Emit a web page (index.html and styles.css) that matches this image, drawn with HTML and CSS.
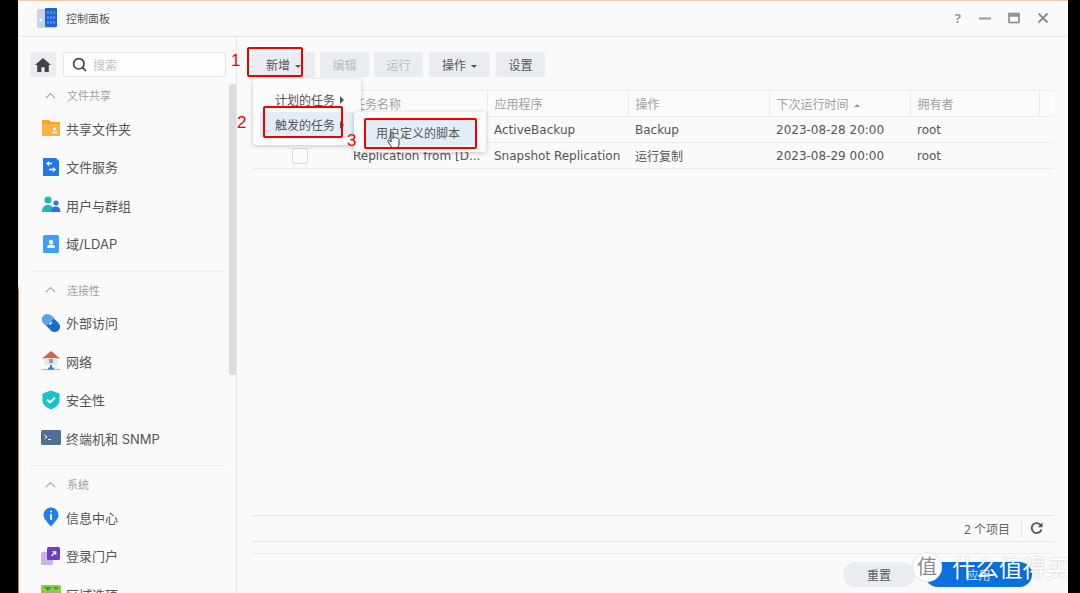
FILE: index.html
```html
<!DOCTYPE html>
<html lang="zh-CN">

<head>
    <meta charset="UTF-8">
    <meta name="viewport" content="width=device-width, initial-scale=1.0">
    <title>控制面板</title>
    <link rel="stylesheet" href="styles.css">
</head>

<body>
    <div class="desktop">
        <div class="window">
            <header class="titlebar">
                <svg class="app-icon" width="22" height="22" viewBox="0 0 22 22">
                    <rect x="1" y="2" width="20" height="19" rx="2" fill="#c9d3e6" />
                    <rect x="9" y="1" width="12" height="19" rx="1" fill="#1f63d8" />
                    <path d="M12 4v13M15 4v13M18 4v13" stroke="#7fb2f5" stroke-width="1" stroke-dasharray="3 2" />
                    <circle cx="5" cy="13" r="1.6" fill="#fff" />
                </svg>
                <span class="app-title">控制面板</span>
                <div class="win-buttons">
                    <span class="win-help">?</span>
                    <svg width="12" height="12" viewBox="0 0 12 12"><path d="M0 6.5h12" stroke="#999" stroke-width="2" /></svg>
                    <svg width="12" height="12" viewBox="0 0 12 12"><rect x="1" y="1.5" width="10" height="9" fill="none" stroke="#8d8d8d" stroke-width="1.6" /><path d="M1 3.5h10" stroke="#8d8d8d" stroke-width="2.4" /></svg>
                    <svg width="12" height="12" viewBox="0 0 12 12"><path d="M1.5 1.5l9 9M10.5 1.5l-9 9" stroke="#8d8d8d" stroke-width="1.9" /></svg>
                </div>
            </header>

            <div class="content">
                <aside class="sidebar">
                    <div class="search-row">
                        <button class="home-btn">
                            <svg width="16" height="14" viewBox="0 0 16 14"><path d="M8 0L0 7h2.2v7h4.2V9.3h3.2V14h4.2V7H16z" fill="#444" /></svg>
                        </button>
                        <div class="search-box">
                            <svg width="15" height="15" viewBox="0 0 15 15"><circle cx="6.8" cy="6.8" r="5.2" fill="none" stroke="#444" stroke-width="1.7" /><path d="M10.6 10.6l3.4 3.4" stroke="#444" stroke-width="1.7" /></svg>
                            <span>搜索</span>
                        </div>
                    </div>

                    <section class="nav-group">
                        <div class="nav-head">
                            <svg width="11" height="7" viewBox="0 0 11 7"><path d="M1 6l4.500-4.500L10 6" fill="none" stroke="#aaa" stroke-width="1.200" /></svg>
                            <span>文件共享</span>
                        </div>
                        <div class="nav-item">
                            <svg width="20" height="20" viewBox="0 0 20 20"><path d="M1 2h7l2 2h9v14H1z" fill="#f6a429" /><path d="M1 6h18v12H1z" fill="#fbb442" /><path d="M11 14.500h5" stroke="#fff" stroke-width="1.500" /><circle cx="13.500" cy="11" r="1.500" fill="#fff" /></svg>
                            <span>共享文件夹</span>
                        </div>
                        <div class="nav-item">
                            <svg width="20" height="20" viewBox="0 0 20 20"><path d="M3 1h12l3 3v14a1 1 0 0 1-1 1H3a1 1 0 0 1-1-1V2a1 1 0 0 1 1-1z" fill="#2278ea" /><path d="M11 6.500H6.500M8 4.800L6 6.600l2 1.800M8 12.500h5.500M12 10.800l2 1.800-2 1.800" fill="none" stroke="#fff" stroke-width="1.300" /></svg>
                            <span>文件服务</span>
                        </div>
                        <div class="nav-item">
                            <svg width="20" height="20" viewBox="0 0 20 20"><circle cx="7" cy="5" r="3.600" fill="#1cb8bd" /><path d="M1 17c0-5 2.500-7 6-7s6 2 6 7z" fill="#1cb8bd" /><circle cx="15" cy="8" r="2.500" fill="#2f73de" /><path d="M10 17c0-3.500 2-5.500 5-5.500s4.500 2 4.500 5.500z" fill="#2f73de" /></svg>
                            <span>用户与群组</span>
                        </div>
                        <div class="nav-item">
                            <svg width="20" height="20" viewBox="0 0 20 20"><rect x="2" y="1" width="16" height="18" rx="1.500" fill="#3f9ef5" /><circle cx="10" cy="8" r="2.200" fill="#fff" /><path d="M6 14c0-2.500 1.500-3.500 4-3.500s4 1 4 3.500z" fill="#fff" /></svg>
                            <span>域/LDAP</span>
                        </div>
                    </section>

                    <section class="nav-group">
                        <div class="nav-head">
                            <svg width="11" height="7" viewBox="0 0 11 7"><path d="M1 6l4.500-4.500L10 6" fill="none" stroke="#aaa" stroke-width="1.200" /></svg>
                            <span>连接性</span>
                        </div>
                        <div class="nav-item">
                            <svg width="20" height="20" viewBox="0 0 20 20"><path d="M6 1.500a5 5 0 0 0-3.500 8.500l7.500 7.500a5 5 0 0 0 7.500-7.500L10 2.500a5 5 0 0 0-4-1z" fill="#1c67d8" /><path d="M6 1.500a5 5 0 0 0-3.500 8.500l3 3 8-8-3.500-2.500a5 5 0 0 0-4-1z" fill="#55a5f2" /><path d="M8.500 11.500l2.500-2.500" stroke="#fff" stroke-width="1.600" /></svg>
                            <span>外部访问</span>
                        </div>
                        <div class="nav-item">
                            <svg width="20" height="20" viewBox="0 0 20 20"><path d="M10 0L1 7.500h18z" fill="#d9604c" /><path d="M3.500 7h13v7h-13z" fill="#e4e4e4" /><rect x="8" y="8" width="4" height="4" fill="#9a9a9a" /><path d="M10 14v3" stroke="#2f7de0" stroke-width="2" /><path d="M1 18.500h18" stroke="#b5b5b5" stroke-width="1.200" /><path d="M7 17.500h6" stroke="#2f7de0" stroke-width="2" /></svg>
                            <span>网络</span>
                        </div>
                        <div class="nav-item">
                            <svg width="20" height="20" viewBox="0 0 20 20"><path d="M10 .5l8.500 3v7c0 4-3.500 7-8.500 9-5-2-8.500-5-8.500-9v-7z" fill="#14c4c9" /><path d="M6 9.500l3 3 5-5" fill="none" stroke="#fff" stroke-width="1.800" /></svg>
                            <span>安全性</span>
                        </div>
                        <div class="nav-item">
                            <svg width="20" height="20" viewBox="0 0 20 20"><rect y="2" width="20" height="15" rx="1.500" fill="#4f6f94" /><path d="M3.500 7l2.500 2-2.500 2M7 11.500h3" fill="none" stroke="#fff" stroke-width="1" /></svg>
                            <span>终端机和 SNMP</span>
                        </div>
                    </section>

                    <section class="nav-group">
                        <div class="nav-head">
                            <svg width="11" height="7" viewBox="0 0 11 7"><path d="M1 6l4.500-4.500L10 6" fill="none" stroke="#aaa" stroke-width="1.200" /></svg>
                            <span>系统</span>
                        </div>
                        <div class="nav-item">
                            <svg width="20" height="20" viewBox="0 0 20 20"><path d="M10 .5a7.500 7.500 0 0 1 7.500 7.500c0 3.500-3 6-7.500 11.500C5.500 14 2.500 11.500 2.500 8A7.500 7.500 0 0 1 10 .5z" fill="#1f7df0" /><path d="M10 7v6" stroke="#fff" stroke-width="1.800" /><circle cx="10" cy="4.500" r="1.100" fill="#fff" /></svg>
                            <span>信息中心</span>
                        </div>
                        <div class="nav-item">
                            <svg width="20" height="20" viewBox="0 0 20 20"><rect y="6" width="12" height="13" rx="1.500" fill="#c9b0ea" /><rect x="6" y="1" width="13" height="13" rx="1.500" fill="#6a3fc0" /><path d="M10.500 10l4-4M11.500 5.800h3.200V9" fill="none" stroke="#fff" stroke-width="1.200" /></svg>
                            <span>登录门户</span>
                        </div>
                        <div class="nav-item">
                            <svg width="20" height="20" viewBox="0 0 20 20"><rect y="1" width="20" height="18" rx="1.500" fill="#8ccb3c" /><path d="M3 3l4 4 4-4zM12 3l3 3 3-3z" fill="#2e9a6a" /></svg>
                            <span>区域选项</span>
                        </div>
                    </section>

                    <div class="scroll-thumb"></div>
                </aside>

                <main class="main">
                    <div class="toolbar">
                        <button class="tool-btn btn-add">新增<i class="caret"></i></button>
                        <button class="tool-btn is-disabled btn-edit">编辑</button>
                        <button class="tool-btn is-disabled btn-edit">运行</button>
                        <button class="tool-btn btn-action">操作<i class="caret"></i></button>
                        <button class="tool-btn btn-edit">设置</button>
                    </div>

                    <div class="table-area">
                        <table class="task-table">
                            <colgroup>
                                <col class="col-name">
                                <col class="col-std">
                                <col class="col-std">
                                <col class="col-std">
                                <col class="col-owner">
                                <col>
                            </colgroup>
                            <thead>
                                <tr>
                                    <th class="name-cell">任务名称</th>
                                    <th>应用程序</th>
                                    <th>操作</th>
                                    <th>下次运行时间 <i class="sort-mark"></i></th>
                                    <th>拥有者</th>
                                    <th></th>
                                </tr>
                            </thead>
                            <tbody>
                                <tr>
                                    <td></td>
                                    <td>ActiveBackup</td>
                                    <td>Backup</td>
                                    <td>2023-08-28 20:00</td>
                                    <td>root</td>
                                    <td></td>
                                </tr>
                                <tr>
                                    <td class="name-cell"><span class="checkbox"></span>Replication from [D...</td>
                                    <td>Snapshot Replication</td>
                                    <td>运行复制</td>
                                    <td>2023-08-29 00:00</td>
                                    <td>root</td>
                                    <td></td>
                                </tr>
                            </tbody>
                        </table>
                    </div>

                    <div class="status-bar">
                        <span>2 个项目</span>
                        <i class="status-sep"></i>
                        <svg width="13" height="13" viewBox="0 0 13 13"><path d="M10.800 3.200A5 5 0 1 0 11.500 7.500" fill="none" stroke="#555" stroke-width="1.800" /><path d="M12.500 .5v4.800H7.700z" fill="#555" /></svg>
                    </div>

                    <div class="form-actions">
                        <button class="pill-btn btn-reset">重置</button>
                        <button class="pill-btn btn-apply">应用</button>
                    </div>

                    <!-- 新增 dropdown and its submenu -->
                    <div class="menu menu-main">
                        <div class="menu-item">计划的任务<i class="menu-arrow"></i></div>
                        <div class="menu-item is-hover">触发的任务<i class="menu-arrow"></i></div>
                    </div>
                    <div class="menu menu-sub">
                        <div class="menu-item is-hover">用户定义的脚本</div>
                    </div>
                    <svg class="hand-cursor" width="14" height="18" viewBox="0 0 14 18">
                        <path d="M4 1.500c0-1 2-1 2 0v6l.5-1.200c1-.5 1.500 0 1.800.6.800-.6 1.500-.2 1.800.5.800-.4 1.900 0 1.900 1V13c0 2.500-1.500 4-3.500 4H7c-2 0-2.500-1-3.500-2.500L1 10.500c-.6-1.200.8-2 1.700-1L4 11z" fill="#fff" stroke="#333" stroke-width="1" />
                    </svg>

                    <!-- red step marks -->
                    <div class="mark mark-1"></div>
                    <div class="mark mark-2"></div>
                    <div class="mark mark-3"></div>
                    <span class="mark-num num-1">1</span>
                    <span class="mark-num num-2">2</span>
                    <span class="mark-num num-3">3</span>
                </main>
            </div>
        </div>

        <div class="stamp">
            <span class="stamp-logo">值</span>
            <span class="stamp-text">什么值得买</span>
        </div>
    </div>
</body>

</html>
```

FILE: styles.css
```css
html,
body {
    margin: 0;
    height: 100%;
    overflow: hidden;
    background: #000;
}

body {
    font-family: "Noto Sans", "Noto Sans CJK SC", sans-serif;
    color: #555;
    font-size: 13px;
}

button {
    font-family: inherit;
    border: none;
    padding: 0;
}

.desktop {
    position: relative;
    width: 1050px;
    height: 593px;
    margin-left: 18px;
    padding-top: 1px;
    box-sizing: border-box;
    background: linear-gradient(#e9c9a6 1px, #f4f1ec 1px, #f4f1ec 48%, #d2742f 49%);
}

.window {
    height: 592px;
    margin-left: 1px;
    background: #fafafa;
    display: flex;
    flex-direction: column;
}

/* title bar */
.titlebar {
    height: 33px;
    flex: none;
    display: flex;
    align-items: center;
    padding: 0 19px 2px 17px;
    border-bottom: 1px solid #e6e6e6;
}

.app-icon {
    margin-right: 8px;
}

.app-title {
    font-size: 11px;
    color: #555;
}

.win-buttons {
    margin-left: auto;
    display: flex;
    align-items: center;
    gap: 17px;
}

.win-help {
    font-size: 13px;
    font-weight: 700;
    color: #999;
    margin-right: 1px;
}

.content {
    flex: 1;
    min-height: 0;
    display: flex;
}

/* left navigation */
.sidebar {
    position: relative;
    width: 218px;
    flex: none;
    box-sizing: border-box;
    overflow: hidden;
    border-right: 1px solid #e6e6e6;
}

.search-row {
    display: flex;
    gap: 7px;
    padding: 15px 10px 5px 11px;
}

.home-btn {
    width: 26px;
    height: 25px;
    background: #e9edf1;
    border-radius: 3px;
    display: flex;
    align-items: center;
    justify-content: center;
}

.search-box {
    flex: 1;
    height: 25px;
    box-sizing: border-box;
    border: 1px solid #e4e4e4;
    border-radius: 3px;
    background: #fdfdfd;
    display: flex;
    align-items: center;
    gap: 6px;
    padding-left: 8px;
    font-size: 12px;
    color: #c4c4c4;
}

.nav-group {
    margin: 0 11px;
    padding-bottom: 7.5px;
    margin-bottom: 5px;
    border-bottom: 1px solid #eeeeee;
}

.nav-group:last-of-type {
    border-bottom: none;
}

.nav-head {
    height: 26px;
    display: flex;
    align-items: center;
    gap: 11px;
    padding-left: 15px;
    margin-bottom: 1px;
    font-size: 11px;
    color: #a2a2a2;
}

.nav-item {
    height: 38.5px;
    display: flex;
    align-items: center;
    gap: 5px;
    padding-left: 11px;
    font-family: Inter, "Noto Sans CJK SC", sans-serif;
    color: #555;
}

.scroll-thumb {
    position: absolute;
    left: 210px;
    top: 47px;
    width: 7px;
    height: 291px;
    border-radius: 4px;
    background: #dcdcdc;
}

/* right side */
.main {
    position: relative;
    flex: 1;
    min-width: 0;
    display: flex;
    flex-direction: column;
}

.toolbar {
    display: flex;
    gap: 5px;
    padding: 15px 0 13px 15px;
}

.tool-btn {
    height: 25px;
    background: #e9edf1;
    border-radius: 3px;
    color: #555;
    font-size: 12px;
    text-align: center;
}

.btn-add {
    width: 63px;
}

.btn-edit {
    width: 49px;
}

.btn-action {
    width: 61px;
    margin-left: 1px;
    margin-right: 1px;
}

.is-disabled {
    color: #b9bcbf;
}

.caret {
    display: inline-block;
    margin-left: 5px;
    vertical-align: middle;
    border-left: 3px solid transparent;
    border-right: 3px solid transparent;
    border-top: 3px solid #555;
}

.table-area {
    flex: 1;
    min-height: 0;
    margin: 0 14px 0 15px;
    border-bottom: 1px solid #e6e6e6;
}

.task-table {
    width: 802px;
    table-layout: fixed;
    border-collapse: collapse;
    font-family: "DejaVu Sans", "Noto Sans CJK SC", sans-serif;
    font-size: 12px;
}

.col-name {
    width: 235px;
}

.col-std {
    width: 141px;
}

.col-owner {
    width: 129px;
}

.task-table th {
    height: 25px;
    padding: 0 0 0 7px;
    text-align: left;
    font-weight: 400;
    color: #a0a0a0;
    border-top: 1px solid #ececec;
    border-bottom: 1px solid #ececec;
    border-right: 1px solid #ececec;
    background: #fbfbfb;
}

.task-table th:last-child {
    border-right: none;
}

.task-table td {
    height: 25px;
    padding: 0 0 0 7px;
    color: #555;
    white-space: nowrap;
    border-bottom: 1px solid #ececec;
}

.task-table .name-cell {
    padding-left: 101px;
    position: relative;
}

.checkbox {
    position: absolute;
    left: 40px;
    top: 5px;
    width: 14px;
    height: 14px;
    border: 1px solid #dcdcdc;
    border-radius: 2px;
    background: #fbfbfb;
}

.sort-mark {
    display: inline-block;
    margin-left: 2px;
    vertical-align: middle;
    border-left: 3px solid transparent;
    border-right: 3px solid transparent;
    border-bottom: 3px solid #999;
}

.status-bar {
    height: 25px;
    flex: none;
    margin: 0 14px 0 15px;
    display: flex;
    align-items: center;
    justify-content: flex-end;
    gap: 8px;
    padding-right: 11px;
    border-bottom: 1px solid #e6e6e6;
    font-size: 12px;
    color: #666;
}

.status-sep {
    width: 1px;
    height: 17px;
    background: #e2e2e2;
    margin-left: 3px;
}

.form-actions {
    height: 40px;
    flex: none;
    margin: 11px 14px 0 15px;
    box-sizing: border-box;
    padding: 8px 22px 0 0;
    display: flex;
    justify-content: flex-end;
    gap: 10px;
    border-top: 1px solid #ececec;
}

.pill-btn {
    height: 25px;
    border-radius: 13px;
    font-size: 12px;
}

.btn-reset {
    width: 72px;
    background: #e9edf1;
    color: #555;
}

.btn-apply {
    width: 107px;
    background: #0a70e0;
    color: #d8e8fb;
}

/* dropdown menus */
.menu {
    position: absolute;
    background: #fbfbfb;
    border-radius: 3px;
    box-shadow: 0 1px 5px rgba(0, 0, 0, 0.22);
    font-size: 12px;
}

.menu-main {
    left: 16px;
    top: 42px;
    width: 108px;
    height: 66px;
    padding-top: 8px;
    box-sizing: border-box;
}

.menu-sub {
    left: 117px;
    top: 75px;
    width: 132px;
    height: 40px;
    padding: 8px 10px 0;
    box-sizing: border-box;
}

.menu-item {
    height: 25px;
    display: flex;
    align-items: center;
    padding-left: 22px;
    color: #555;
}

.menu-sub .menu-item {
    height: 26px;
    padding-left: 12px;
}

.menu-item.is-hover {
    background: #e3edf6;
}

.menu-main .menu-item.is-hover {
    margin-left: 7px;
    padding-left: 15px;
}

.menu-arrow {
    margin-left: 5px;
    border-top: 4px solid transparent;
    border-bottom: 4px solid transparent;
    border-left: 4px solid #555;
}

.hand-cursor {
    position: absolute;
    left: 150px;
    top: 94px;
}

/* red step marks drawn over the page */
.mark {
    position: absolute;
    box-sizing: border-box;
    border: 2px solid #f00000;
    border-radius: 2px;
}

.mark-1 {
    left: 10px;
    top: 10px;
    width: 56px;
    height: 30px;
}

.mark-2 {
    left: 26px;
    top: 69px;
    width: 80px;
    height: 32px;
}

.mark-3 {
    left: 127px;
    top: 81px;
    width: 113px;
    height: 31px;
}

.mark-num {
    position: absolute;
    font-family: "Liberation Sans", sans-serif;
    font-size: 17px;
    line-height: 18px;
    color: #f00000;
}

.num-1 {
    left: -6px;
    top: 15px;
}

.num-2 {
    left: 0;
    top: 77px;
}

.num-3 {
    left: 110px;
    top: 95px;
}

/* site stamp in the lower corner */
.stamp {
    position: absolute;
    left: 894px;
    top: 544px;
    width: 156px;
    height: 45px;
    display: flex;
    align-items: center;
    gap: 10px;
    overflow: hidden;
    color: #fff;
}

.stamp-logo {
    width: 30px;
    height: 30px;
    flex: none;
    border-radius: 50%;
    background: #fff;
    box-shadow: inset 0 0 0 1px #e4e4e4;
    color: #8a8a8a;
    font-size: 20px;
    line-height: 30px;
    text-align: center;
}

.stamp-text {
    font-size: 23.5px;
    white-space: nowrap;
    text-shadow: 0 0 2px rgba(0, 0, 0, 0.25);
}
```
